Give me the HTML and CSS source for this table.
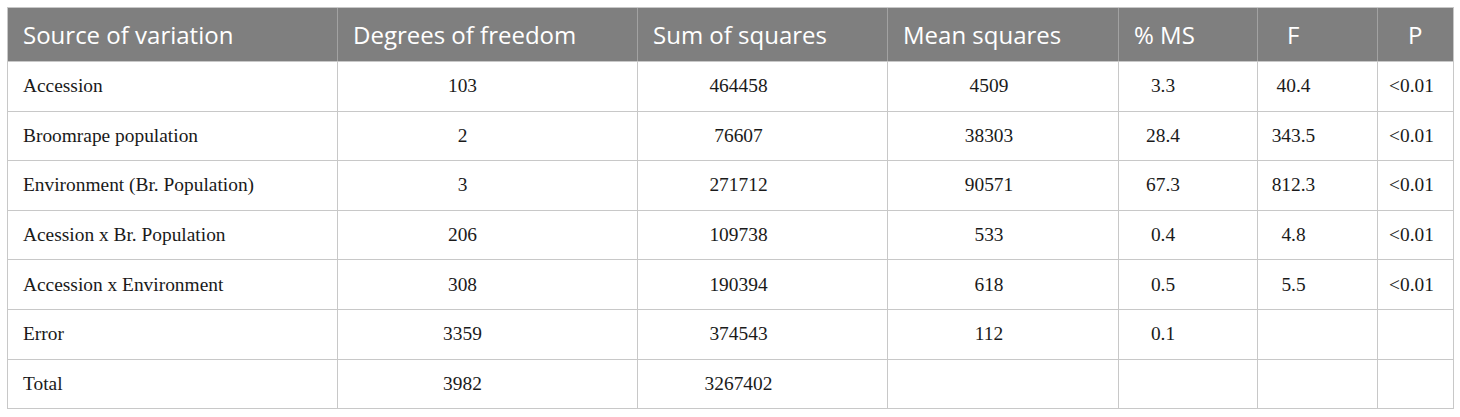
FILE: index.html
```html
<!DOCTYPE html>
<html>
<head>
<meta charset="utf-8">
<link rel="stylesheet" href="styles.css">
</head>
<body>
<table class="anova">
  <colgroup>
    <col class="c1"><col class="c2"><col class="c3"><col class="c4"><col class="c5"><col class="c6"><col class="c7">
  </colgroup>
  <thead>
    <tr>
      <th>Source of variation</th>
      <th>Degrees of freedom</th>
      <th>Sum of squares</th>
      <th>Mean squares</th>
      <th>% MS</th>
      <th class="hf">F</th>
      <th class="hp">P</th>
    </tr>
  </thead>
  <tbody>
    <tr><td class="src">Accession</td><td class="df">103</td><td class="ss">464458</td><td class="ms">4509</td><td class="pm">3.3</td><td class="f">40.4</td><td class="p">&lt;0.01</td></tr>
    <tr><td class="src">Broomrape population</td><td class="df">2</td><td class="ss">76607</td><td class="ms">38303</td><td class="pm">28.4</td><td class="f">343.5</td><td class="p">&lt;0.01</td></tr>
    <tr><td class="src">Environment (Br. Population)</td><td class="df">3</td><td class="ss">271712</td><td class="ms">90571</td><td class="pm">67.3</td><td class="f">812.3</td><td class="p">&lt;0.01</td></tr>
    <tr><td class="src">Acession x Br. Population</td><td class="df">206</td><td class="ss">109738</td><td class="ms">533</td><td class="pm">0.4</td><td class="f">4.8</td><td class="p">&lt;0.01</td></tr>
    <tr><td class="src">Accession x Environment</td><td class="df">308</td><td class="ss">190394</td><td class="ms">618</td><td class="pm">0.5</td><td class="f">5.5</td><td class="p">&lt;0.01</td></tr>
    <tr><td class="src">Error</td><td class="df">3359</td><td class="ss">374543</td><td class="ms">112</td><td class="pm">0.1</td><td class="f"></td><td class="p"></td></tr>
    <tr><td class="src">Total</td><td class="df">3982</td><td class="ss">3267402</td><td class="ms"></td><td class="pm"></td><td class="f"></td><td class="p"></td></tr>
  </tbody>
</table>
</body>
</html>
```

FILE: styles.css
```css
html, body {
  margin: 0;
  background: #ffffff;
}
body {
  padding: 7px 0 0 7px;
}
.anova {
  border-collapse: collapse;
  table-layout: fixed;
  width: 1446px;
  border: 1px solid #c8c8c8;
}
.c1 { width: 330px; }
.c2 { width: 300px; }
.c3 { width: 250px; }
.c4 { width: 231px; }
.c5 { width: 139px; }
.c6 { width: 120px; }
.c7 { width: 76px; }

.anova th {
  background: #7f7f7f;
  color: #ffffff;
  font-family: "Open Sans", "Noto Sans", sans-serif;
  font-weight: 400;
  font-size: 24px;
  text-align: left;
  height: 53px;
  padding: 0 0 0 15px;
  border-left: 1px solid #a2a2a2;
  border-top: 1px solid #c8c8c8;
  border-bottom: 1px solid #c8c8c8;
  vertical-align: middle;
  white-space: nowrap;
}
.anova th:first-child {
  padding-left: 15px;
  border-left: 1px solid #c8c8c8;
}
.anova th.hf { padding-left: 29px; }
.anova th.hp { padding-left: 30px; }

.anova td {
  font-family: "Liberation Serif", "Times New Roman", serif;
  font-size: 19.4px;
  color: #1a1a1a;
  height: 48.6px;
  border: 1px solid #c8c8c8;
  text-align: center;
  vertical-align: middle;
  padding: 0;
  white-space: nowrap;
}
.anova td.src { text-align: left; padding-left: 15px; }
.anova td.df { padding-right: 50px; }
.anova td.ss { padding-right: 48px; }
.anova td.ms { padding-right: 28px; }
.anova td.pm { padding-right: 50px; }
.anova td.f { padding-right: 48px; }
.anova td.p { padding-right: 8px; }
```
